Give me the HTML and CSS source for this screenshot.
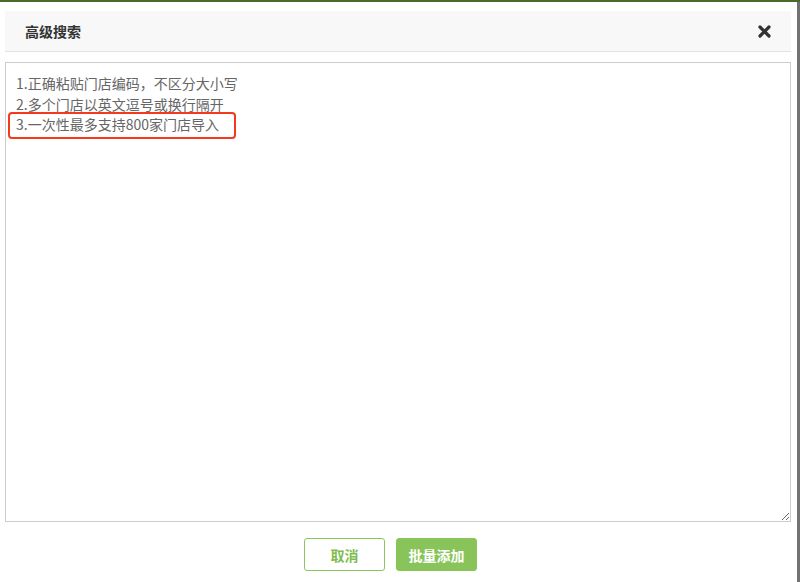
FILE: index.html
```html
<!DOCTYPE html>
<html lang="zh">
<head>
<meta charset="utf-8">
<link rel="stylesheet" href="styles.css">
</head>
<body>
<div class="topbar"></div>
<div class="frame">
  <div class="modal">
    <div class="header">
      <span class="title">高级搜索</span>
      <svg class="close" width="13" height="13" viewBox="0 0 13 13"><path d="M2 2 L11 11 M11 2 L2 11" stroke="#333" stroke-width="3.2" stroke-linecap="round"/></svg>
    </div>
    <div class="body">
      <textarea class="codes" placeholder="1.正确粘贴门店编码，不区分大小写&#10;2.多个门店以英文逗号或换行隔开&#10;3.一次性最多支持800家门店导入"></textarea>
      <div class="mark"></div>
    </div>
    <div class="footer">
      <button class="btn btn-cancel">取消</button>
      <button class="btn btn-primary">批量添加</button>
    </div>
  </div>
  <div class="edge"></div>
</div>
</body>
</html>
```
FILE: styles.css
```css
html, body {
  margin: 0;
  padding: 0;
  background: #fff;
  font-family: "Noto Sans CJK SC", "Liberation Sans", sans-serif;
}
.topbar {
  height: 2px;
  background: #4b6a2b;
}
.frame {
  display: flex;
  height: 580px;
}
.modal {
  flex: 1;
  display: flex;
  flex-direction: column;
  padding: 9px 6px 0 5px;
}
.edge {
  width: 3px;
  background: #727272;
}
.header {
  height: 40px;
  background: #f8f8f8;
  border-bottom: 1px solid #e3e3e3;
  display: flex;
  align-items: center;
  justify-content: space-between;
  padding: 0 20px 0 20px;
}
.title {
  font-size: 14px;
  font-weight: bold;
  color: #333;
}
.close {
  display: block;
}
.body {
  position: relative;
  margin-top: 10px;
}
.codes {
  display: block;
  box-sizing: border-box;
  width: 100%;
  height: 460px;
  margin: 0;
  border: 1px solid #ccc;
  border-radius: 0;
  padding: 10px 10px;
  font-family: "Noto Sans CJK SC", "Liberation Sans", sans-serif;
  font-size: 14px;
  line-height: 20.5px;
  color: #333;
  outline: none;
}
.codes::placeholder {
  color: #666;
  opacity: 1;
}
.mark {
  position: absolute;
  left: 3px;
  top: 50px;
  width: 224px;
  height: 23px;
  border: 2px solid #f5391c;
  border-radius: 4px;
}
.footer {
  display: flex;
  justify-content: center;
  gap: 11px;
  margin-top: 16px;
  padding-right: 15px;
}
.btn {
  width: 81px;
  height: 33px;
  box-sizing: border-box;
  border-radius: 3px;
  font-family: "Noto Sans CJK SC", "Liberation Sans", sans-serif;
  font-size: 14px;
  font-weight: bold;
  padding: 0;
  cursor: pointer;
}
.btn-cancel {
  background: #fff;
  border: 1px solid #8cc55d;
  color: #7fbd4f;
}
.btn-primary {
  background: #88c45a;
  border: 1px solid #88c45a;
  color: #fff;
}
```
